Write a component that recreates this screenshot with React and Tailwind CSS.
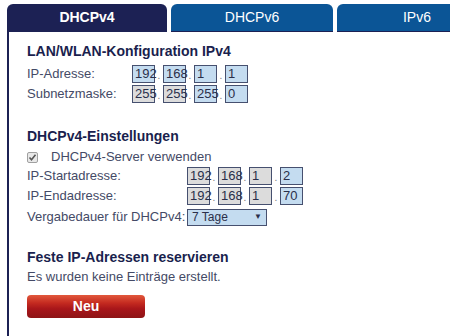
import React from "react";

const Box = ({ v, grey }) => (
  <div
    className={`w-[23px] h-[18px] border border-[#46506f] ${grey ? "bg-[#dcdcdc]" : "bg-[#c4dcf0]"} text-[13px] leading-[16px] pl-[2px] text-[#2a2f4a]`}
  >
    {v}
  </div>
);

const Dot = () => (
  <div className="w-[8px] h-[18px] flex items-end justify-center text-[10px] leading-[14px] text-[#777]">.</div>
);

const IpRow = ({ label, lw, vals }) => (
  <div className="flex items-center h-[18px]">
    <div className={`${lw} text-[13px] text-[#444a66]`}>{label}</div>
    <div className="flex">
      {vals.map((x, i) => (
        <React.Fragment key={i}>
          {i > 0 && <Dot />}
          <Box v={x[0]} grey={x[1]} />
        </React.Fragment>
      ))}
    </div>
  </div>
);

export default function App() {
  return (
    <div className="w-[450px] h-[336px] overflow-hidden bg-white font-['Liberation_Sans',Arial,sans-serif]">
      <div className="flex gap-[4px] pl-[7px] pt-[4px] items-end">
        <div className="w-[160px] h-[28px] shrink-0 rounded-t-[6px] bg-[#1c2154] text-white font-bold text-[14px] flex items-center justify-center pb-[1px]">
          DHCPv4
        </div>
        <div className="w-[162px] h-[28px] shrink-0 rounded-t-[6px] bg-[#0b5596] border-b border-[#1c2154] text-white text-[14px] flex items-center justify-center">
          DHCPv6
        </div>
        <div className="w-[160px] h-[28px] shrink-0 rounded-t-[6px] bg-[#0b5596] border-b border-[#1c2154] text-white text-[14px] flex items-center justify-center">
          IPv6
        </div>
      </div>
      <div className="ml-[7px] border-l-2 border-[#1c2154] h-[304px] pl-[18px] pt-[11px]">
        <div className="text-[14px] font-bold text-[#1a1f4e] leading-[16px]">LAN/WLAN-Konfiguration IPv4</div>
        <div className="mt-[6px] flex flex-col gap-[2px]">
          <IpRow label="IP-Adresse:" lw="w-[105px]" vals={[["192"], ["168"], ["1"], ["1"]]} />
          <IpRow label="Subnetzmaske:" lw="w-[105px]" vals={[["255", 1], ["255", 1], ["255"], ["0"]]} />
        </div>

        <div className="mt-[25px] text-[14px] font-bold text-[#1a1f4e] leading-[16px]">DHCPv4-Einstellungen</div>
        <div className="mt-[5px] flex items-center h-[16px]">
          <div className="w-[11px] h-[11px] border border-[#a0a0a0] bg-[#e8e8e8] rounded-[2px] flex items-center justify-center">
            <svg width="9" height="9" viewBox="0 0 9 9">
              <path d="M1.5 4.5 L3.5 6.8 L7.5 1.8" stroke="#555" strokeWidth="1.6" fill="none" />
            </svg>
          </div>
          <span className="ml-[13px] text-[13px] text-[#444a66]">DHCPv4-Server verwenden</span>
        </div>
        <div className="mt-[2px] flex flex-col gap-[2px]">
          <IpRow label="IP-Startadresse:" lw="w-[160px]" vals={[["192", 1], ["168", 1], ["1", 1], ["2"]]} />
          <IpRow label="IP-Endadresse:" lw="w-[160px]" vals={[["192", 1], ["168", 1], ["1", 1], ["70"]]} />
          <div className="flex items-center h-[18px] mt-[1px]">
            <div className="w-[160px] text-[13px] text-[#444a66]">Vergabedauer für DHCPv4:</div>
            <div className="w-[80px] h-[17px] border border-[#46506f] bg-[#c4dcf0] flex items-center justify-between px-[4px] text-[12px] text-[#2a2f4a]">
              <span>7 Tage</span>
              <span className="text-[8px]">▼</span>
            </div>
          </div>
        </div>

        <div className="mt-[23px] text-[14px] font-bold text-[#1a1f4e] leading-[16px]">Feste IP-Adressen reservieren</div>
        <div className="mt-[4px] text-[13px] text-[#444a66] leading-[16px]">Es wurden keine Einträge erstellt.</div>
        <div className="mt-[10px] w-[118px] h-[23px] rounded-[4px] bg-[linear-gradient(to_bottom,#e2583c_0%,#c42a20_35%,#a8161a_60%,#8e1416_100%)] flex items-center justify-center text-white font-bold text-[14px]">
          Neu
        </div>
      </div>
    </div>
  );
}
